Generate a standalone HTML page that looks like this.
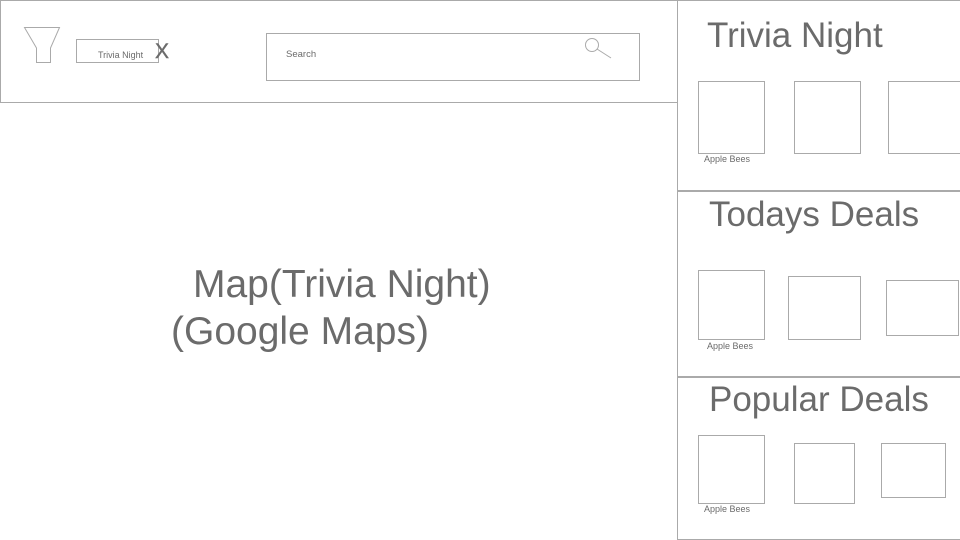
<!DOCTYPE html>
<html><head><style>
body{margin:0;width:960px;height:540px;position:relative;overflow:hidden;background:#fff;font-family:"Liberation Sans",Arial,sans-serif;color:#6b6b6b}
div,span{position:absolute;box-sizing:border-box}
.b{border:1px solid #aaa}
.t{white-space:nowrap;line-height:1}
</style></head><body>
<div class="b" style="left:0;top:0;width:678px;height:103px"></div>
<svg style="position:absolute;left:0;top:0" width="680" height="103">
<path d="M24.5 27.5 H59.5 L50.5 48 V62.5 H36.5 V48 Z" fill="#fff" stroke="#aaa"/>
<circle cx="592" cy="45" r="6.5" fill="none" stroke="#aaa"/>
<line x1="597" y1="49" x2="611" y2="58" stroke="#aaa"/>
</svg>
<div class="b" style="left:76px;top:39px;width:83px;height:24px"></div>
<span class="t" style="left:98px;top:51px;font-size:9px">Trivia Night</span>
<span class="t" style="left:155px;top:41px;font-size:21px;-webkit-text-stroke:0.4px #6b6b6b">X</span>
<div class="b" style="left:266px;top:33px;width:374px;height:48px"></div>
<span class="t" style="left:286px;top:50px;font-size:9.5px">Search</span>
<span class="t" style="left:193px;top:265px;font-size:39px">Map(Trivia Night)</span>
<span class="t" style="left:171px;top:312px;font-size:39px">(Google Maps)</span>
<div style="left:677px;top:0;width:284px;height:540px;border:1px solid #aaa;border-right:none"></div>
<div style="left:677px;top:190px;width:283px;height:2px;background:#aaa"></div>
<div style="left:677px;top:376px;width:283px;height:2px;background:#aaa"></div>
<span class="t" style="left:707px;top:18px;font-size:35px">Trivia Night</span>
<span class="t" style="left:709px;top:197px;font-size:35px">Todays Deals</span>
<span class="t" style="left:709px;top:382px;font-size:35px">Popular Deals</span>
<div class="b" style="left:698px;top:81px;width:67px;height:73px"></div>
<div class="b" style="left:794px;top:81px;width:67px;height:73px"></div>
<div class="b" style="left:888px;top:81px;width:80px;height:73px"></div>
<span class="t" style="left:704px;top:155px;font-size:9px">Apple Bees</span>
<div class="b" style="left:698px;top:270px;width:67px;height:70px"></div>
<div class="b" style="left:788px;top:276px;width:73px;height:64px"></div>
<div class="b" style="left:886px;top:280px;width:73px;height:56px"></div>
<span class="t" style="left:707px;top:342px;font-size:9px">Apple Bees</span>
<div class="b" style="left:698px;top:435px;width:67px;height:69px"></div>
<div class="b" style="left:794px;top:443px;width:61px;height:61px"></div>
<div class="b" style="left:881px;top:443px;width:65px;height:55px"></div>
<span class="t" style="left:704px;top:505px;font-size:9px">Apple Bees</span>
</body></html>
